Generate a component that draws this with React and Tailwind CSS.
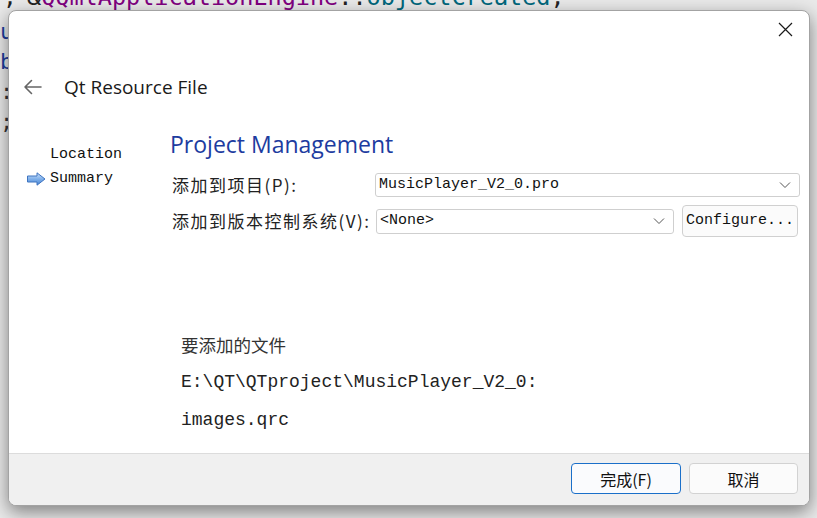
import React from "react";

const mono = { fontFamily: '"Liberation Mono", "Noto Sans CJK SC", monospace' };
const cjk = { fontFamily: '"Noto Sans CJK SC", sans-serif' };

function Chevron() {
  return (
    <svg width="12" height="8" viewBox="0 0 12 8" className="shrink-0">
      <path d="M1 1.5 L6 6.5 L11 1.5" fill="none" stroke="#555" strokeWidth="1" />
    </svg>
  );
}

function NavArrow() {
  return (
    <svg width="19" height="14" viewBox="0 0 19 14">
      <defs>
        <linearGradient id="ag" x1="0" y1="0" x2="0" y2="1">
          <stop offset="0" stopColor="#cfe3fb" />
          <stop offset="0.5" stopColor="#7fb0ea" />
          <stop offset="1" stopColor="#4a86d4" />
        </linearGradient>
      </defs>
      <path d="M0.5 4 H10 V0.8 L18 7 L10 13.2 V10 H0.5 Z" fill="url(#ag)" stroke="#3f74c0" strokeWidth="1" strokeLinejoin="round" />
    </svg>
  );
}

export default function App() {
  return (
    <div className="relative w-[817px] h-[518px] overflow-hidden bg-[#e9e9e9]" style={{ fontFamily: '"Noto Sans", "Noto Sans CJK SC", sans-serif' }}>
      {/* editor text behind the dialog */}
      <div className="absolute left-[3px] top-[-17px] whitespace-pre text-[23px] leading-[28px] text-[#222]" style={{ fontFamily: '"DejaVu Sans Mono", monospace' }}>,</div>
      <div className="absolute left-[27px] top-[-17px] whitespace-pre text-[23.5px] leading-[28px] text-[#222]" style={{ fontFamily: '"DejaVu Sans Mono", monospace' }}>
        <span>&amp;</span>
        <span className="text-[#800080]">QQmlApplicationEngine</span>
        <span>::</span>
        <span className="text-[#00677c]">objectCreated</span>
        <span>,</span>
      </div>
      <div className="absolute left-0 top-[17px] flex flex-col text-[22px] leading-[30px] text-[#1c3c9c]" style={{ fontFamily: '"DejaVu Sans Mono", monospace' }}>
        <span>u</span>
        <span>b</span>
        <span className="text-[#333]">:</span>
        <span className="text-[#333]">;</span>
      </div>

      {/* dialog window */}
      <div className="absolute left-[8px] top-[10px] w-[802px] h-[496px] flex flex-col rounded-lg border border-[#a3a3a3] bg-white overflow-hidden shadow-[0_6px_18px_rgba(0,0,0,0.45)]">
        {/* header */}
        <div className="relative h-[112px] shrink-0">
          <div className="absolute right-[16px] top-[11px]">
            <svg width="15" height="15" viewBox="0 0 15 15">
              <path d="M1 1 L14 14 M14 1 L1 14" stroke="#1a1a1a" strokeWidth="1.2" />
            </svg>
          </div>
          <div className="flex items-center pl-[14px] pt-[64px]">
            <svg width="19" height="16" viewBox="0 0 19 16">
              <path d="M18 8 H2 M8.5 1.5 L2 8 L8.5 14.5" fill="none" stroke="#666" strokeWidth="1.6" strokeLinecap="round" strokeLinejoin="round" />
            </svg>
            <span className="ml-[22px] text-[19px] leading-[24px] text-[#1a1a1a]" style={{ fontFamily: '"Open Sans", sans-serif' }}>Qt Resource File</span>
          </div>
        </div>

        {/* body */}
        <div className="flex flex-1">
          {/* left nav */}
          <div className="w-[161px] shrink-0 pt-[21px] pl-[18px] flex flex-col gap-[3px] text-[15px] leading-[21px] text-[#111]" style={mono}>
            <div className="pl-[23px]">Location</div>
            <div className="flex items-center gap-[4px]">
              <NavArrow />
              <span>Summary</span>
            </div>
          </div>

          {/* content */}
          <div className="flex-1 flex flex-col">
            <div className="text-[23px] leading-[28px] text-[#1d3ca0] pt-[7px]" style={{ fontFamily: '"Open Sans", sans-serif' }}>Project Management</div>
            <div className="mt-[15px] flex items-center pr-[9px]">
              <div className="w-[205px] pl-[2px] text-[17px] leading-[22px] tracking-[1.5px] text-[#222] whitespace-nowrap" style={cjk}>添加到项目(P):</div>
              <div className="flex-1 h-[24px] flex items-center justify-between rounded-[3px] border border-[#cfcfcf] bg-white pl-[3px] pr-[8px]">
                <span className="text-[15px] text-[#111]" style={mono}>MusicPlayer_V2_0.pro</span>
                <Chevron />
              </div>
            </div>
            <div className="mt-[8px] flex items-center pr-[10px]">
              <div className="w-[206px] pl-[2px] text-[17px] leading-[22px] tracking-[1.5px] text-[#222] whitespace-nowrap" style={cjk}>添加到版本控制系统(V):</div>
              <div className="w-[298px] h-[25px] flex items-center justify-between rounded-[3px] border border-[#cfcfcf] bg-white pl-[3px] pr-[8px]">
                <span className="text-[15px] text-[#111]" style={mono}>&lt;None&gt;</span>
                <Chevron />
              </div>
              <div className="ml-[8px] w-[116px] h-[32px] flex items-center justify-center rounded-[4px] border border-[#d0d0d0] bg-[#fbfbfb] text-[15px] text-[#111]" style={mono}>Configure...</div>
            </div>

            <div className="mt-[96px] pl-[11px] text-[17.5px] leading-[24px] text-[#333]" style={cjk}>要添加的文件</div>
            <div className="mt-[13px] pl-[11px] text-[18px] leading-[24px] text-[#222]" style={mono}>E:\QT\QTproject\MusicPlayer_V2_0:</div>
            <div className="mt-[14px] pl-[11px] text-[18px] leading-[24px] text-[#222]" style={mono}>images.qrc</div>
          </div>
        </div>

        {/* footer */}
        <div className="h-[52px] shrink-0 border-t border-[#dcdcdc] bg-[#f0f0f0] flex items-start justify-end gap-[8px] pt-[9px] pr-[11px]">
          <div className="w-[110px] h-[31px] flex items-center justify-center rounded-[4px] border border-[#1a6fc9] bg-[#fafbfd] text-[16px] text-[#111]" style={cjk}>完成(F)</div>
          <div className="w-[109px] h-[31px] flex items-center justify-center rounded-[4px] border border-[#d2d2d2] bg-[#fbfbfb] text-[16px] text-[#111]" style={cjk}>取消</div>
        </div>
      </div>
    </div>
  );
}
